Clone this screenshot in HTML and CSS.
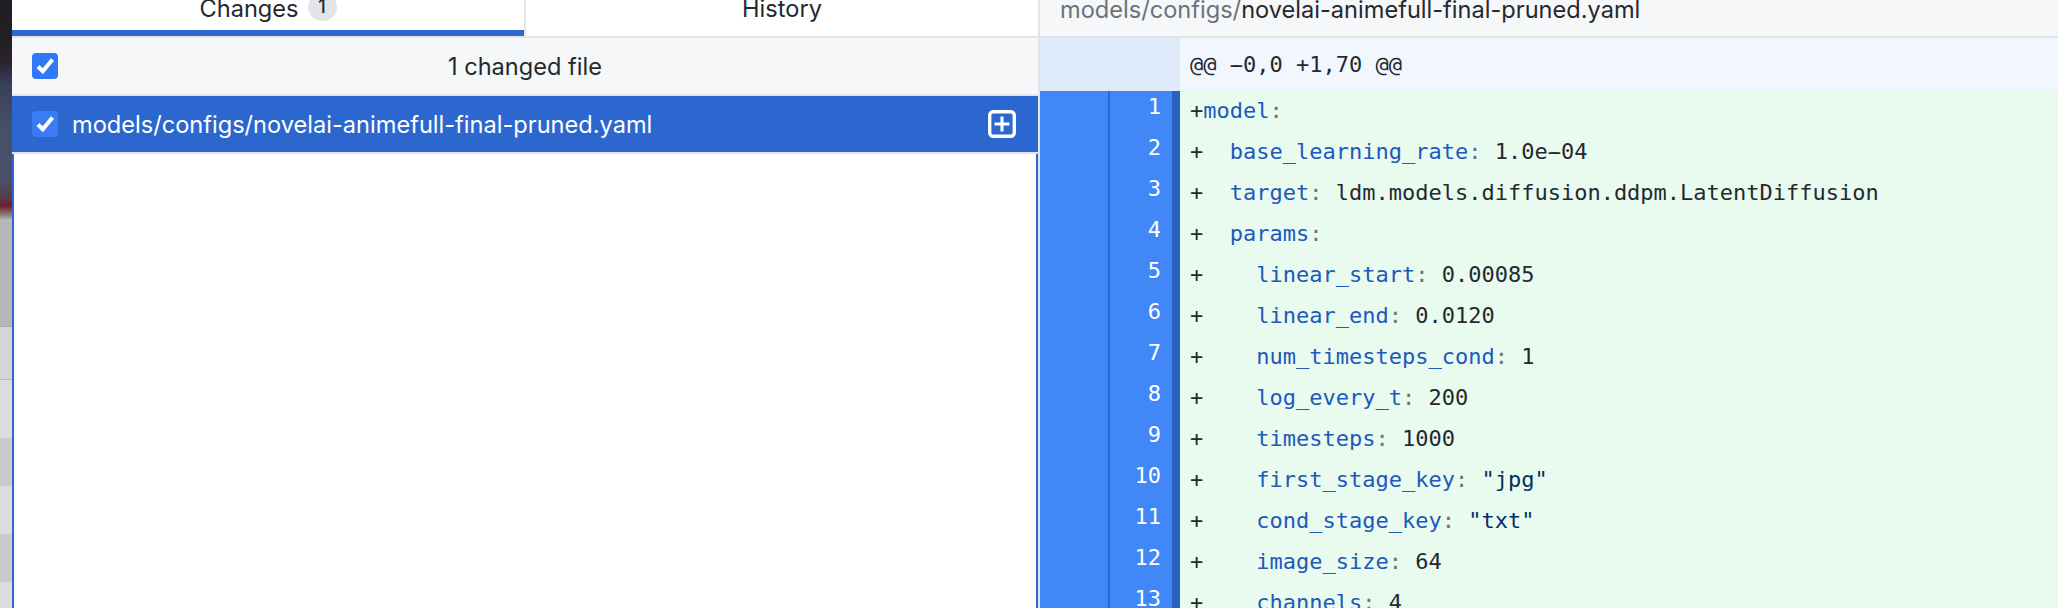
FILE: index.html
```html
<!DOCTYPE html>
<html lang="en">
<head>
<meta charset="utf-8">
<title>Changes</title>
<link rel="stylesheet" href="styles.css">
</head>
<body>
<div class="app">
  <div class="wallpaper">
    <div class="wp-photo"></div>
    <div class="wp-a"></div>
    <div class="wp-b"></div>
    <div class="wp-c wp-long"></div>
    <div class="wp-d"></div>
    <div class="wp-c"></div>
    <div class="wp-d"></div>
    <div class="wp-c"></div>
  </div>
  <section class="sidebar">
    <div class="tabs">
      <div class="tab tab-active"><span>Changes</span><span class="badge">1</span></div>
      <div class="tab"><span>History</span></div>
    </div>
    <div class="list-head">
      <svg class="check check-head" viewBox="0 0 26 26"><rect width="26" height="26" rx="4"/><path d="M6 13.5l4.8 4.8L20.5 6.5"/></svg>
      <div class="list-title">1 changed file</div>
    </div>
    <div class="file-row">
      <svg class="check check-row" viewBox="0 0 26 26"><rect width="26" height="26" rx="4"/><path d="M6 13.5l4.8 4.8L20.5 6.5"/></svg>
      <div class="file-name">models/configs/novelai-animefull-final-pruned.yaml</div>
      <svg class="added" viewBox="0 0 28 28"><rect x="1.7" y="1.7" width="24.6" height="24.6" rx="3.5"/><path d="M14 6.5v15M6.5 14h15"/></svg>
    </div>
    <div class="list-body"></div>
  </section>
  <section class="diff">
    <div class="diff-path"><span class="dir">models/configs/</span>novelai-animefull-final-pruned.yaml</div>
    <div class="hunk"><div class="hunk-gutter"></div><div class="hunk-text">@@ <span class="h">-</span>0,0 +1,70 @@</div></div>
    <div class="line"><div class="old"></div><div class="new">1</div><div class="code">+<span class="k">model</span><span class="c">:</span></div></div>
    <div class="line"><div class="old"></div><div class="new">2</div><div class="code">+  <span class="k">base_learning_rate</span><span class="c">:</span> 1.0e<span class="h">-</span>04</div></div>
    <div class="line"><div class="old"></div><div class="new">3</div><div class="code">+  <span class="k">target</span><span class="c">:</span> ldm.models.diffusion.ddpm.LatentDiffusion</div></div>
    <div class="line"><div class="old"></div><div class="new">4</div><div class="code">+  <span class="k">params</span><span class="c">:</span></div></div>
    <div class="line"><div class="old"></div><div class="new">5</div><div class="code">+    <span class="k">linear_start</span><span class="c">:</span> 0.00085</div></div>
    <div class="line"><div class="old"></div><div class="new">6</div><div class="code">+    <span class="k">linear_end</span><span class="c">:</span> 0.0120</div></div>
    <div class="line"><div class="old"></div><div class="new">7</div><div class="code">+    <span class="k">num_timesteps_cond</span><span class="c">:</span> 1</div></div>
    <div class="line"><div class="old"></div><div class="new">8</div><div class="code">+    <span class="k">log_every_t</span><span class="c">:</span> 200</div></div>
    <div class="line"><div class="old"></div><div class="new">9</div><div class="code">+    <span class="k">timesteps</span><span class="c">:</span> 1000</div></div>
    <div class="line"><div class="old"></div><div class="new">10</div><div class="code">+    <span class="k">first_stage_key</span><span class="c">:</span> <span class="s">"jpg"</span></div></div>
    <div class="line"><div class="old"></div><div class="new">11</div><div class="code">+    <span class="k">cond_stage_key</span><span class="c">:</span> <span class="s">"txt"</span></div></div>
    <div class="line"><div class="old"></div><div class="new">12</div><div class="code">+    <span class="k">image_size</span><span class="c">:</span> 64</div></div>
    <div class="line"><div class="old"></div><div class="new">13</div><div class="code">+    <span class="k">channels</span><span class="c">:</span> 4</div></div>
  </section>
</div>
</body>
</html>
```
FILE: styles.css
```css
* { box-sizing: border-box; }
html, body { margin: 0; height: 100%; overflow: hidden; background: #fff; }
body { font-family: Inter, "Liberation Sans", sans-serif; color: #24292e; }

.app { display: flex; height: 608px; overflow: hidden; }

/* strip of the desktop behind the window */
.wallpaper { flex: 0 0 12px; display: flex; flex-direction: column; }
.wp-photo { flex: 0 0 221px; background: linear-gradient(#1f1e22 0, #232025 40px, #2a2230 62px, #39405a 85px, #465069 130px, #4a5068 180px, #5a3a48 198px, #6d1f28 206px, #8c8c8c 216px, #c2c2c2 221px); }
.wp-a { flex: 0 0 106px; background: #b6b6b6; border-bottom: 1px solid #a9a9a9; }
.wp-b { flex: 0 0 53px; background: #d6d6d6; border-bottom: 1px solid #b9b9b9; }
.wp-c { flex: 0 0 48px; background: #dcdcdc; }
.wp-long { flex-basis: 58px; }
.wp-d { flex: 0 0 48px; background: #c9cbca; }

/* left column */
.sidebar { flex: 0 0 1026px; display: flex; flex-direction: column; background: #fff; }
.tabs { flex: 0 0 38px; display: flex; border-bottom: 2px solid #e1e4e8; }
.tab { flex: 1; display: flex; align-items: flex-end; justify-content: center; gap: 9px; height: 36px; padding-bottom: 13px; font-size: 23.6px; line-height: 28px; white-space: nowrap; }
.tab-active { flex: 0 0 514px; border-right: 2px solid #e1e4e8; box-shadow: inset 0 -6px 0 #2b67ce; }
.tab-active .badge { margin-bottom: 2px; }
.badge { width: 29px; height: 28px; border-radius: 50%; background: #e1e4e8; display: flex; align-items: center; justify-content: center; font-size: 18px; font-weight: 500; }

.list-head { flex: 0 0 58px; display: flex; align-items: center; padding-left: 20px; background: #f6f7f9; border-bottom: 2px solid #e1e4e8; }
.list-title { flex: 1; text-align: center; font-size: 23.6px; padding-right: 46px; }
.check { width: 26px; height: 26px; flex: none; }
.check rect { fill: #3178f6; }
.check path { fill: none; stroke: #fff; stroke-width: 4; }
.check-row rect { fill: #3a7cf3; }

.file-row { flex: 0 0 58px; display: flex; align-items: center; padding: 0 22px 0 20px; gap: 14px; background: #2b67ce; color: #fff; border-bottom: 2px solid #e1e4e8; font-size: 23.6px; }
.file-name { flex: 1; white-space: nowrap; }
.added { width: 28px; height: 28px; flex: none; }
.added rect { fill: none; stroke: #fff; stroke-width: 3.4; }
.added path { fill: none; stroke: #fff; stroke-width: 3; }

.list-body { flex: 1; border-left: 2px solid #2b67ce; border-right: 2px solid #2b67ce; background: #fff; }

/* right column */
.diff { flex: 1; min-width: 0; border-left: 2px solid #e1e4e8; font-family: "DejaVu Sans Mono", monospace; font-size: 22px; }
.diff-path { height: 38px; background: #f6f7f9; border-bottom: 2px solid #e1e4e8; padding: 0 0 12px 20px; display: flex; align-items: flex-end; font-family: Inter, "Liberation Sans", sans-serif; font-size: 23.6px; line-height: 28px; white-space: pre; }
.dir { color: #6a737d; }
.hunk { display: flex; height: 53px; }
.hunk-gutter { flex: 0 0 140px; background: #dfebfb; }
.hunk-text { flex: 1; background: #f2f6fe; padding-left: 10px; line-height: 53px; white-space: pre; }
.line { display: flex; height: 41px; }
.old { flex: 0 0 70px; background: #4187f8; border-right: 2px solid #2a68cc; }
.new { flex: 0 0 70px; background: #4187f8; border-right: 8px solid #2a5fc4; color: #fff; text-align: right; padding-right: 11px; line-height: 31px; }
.code { flex: 1; background: #e9fbee; padding-left: 10px; line-height: 39px; white-space: pre; }
.h { text-shadow: 3px 0 currentColor, -3px 0 currentColor; }
.k { color: #2058bb; }
.c { color: #6a737d; }
.s { color: #032f62; }
```
